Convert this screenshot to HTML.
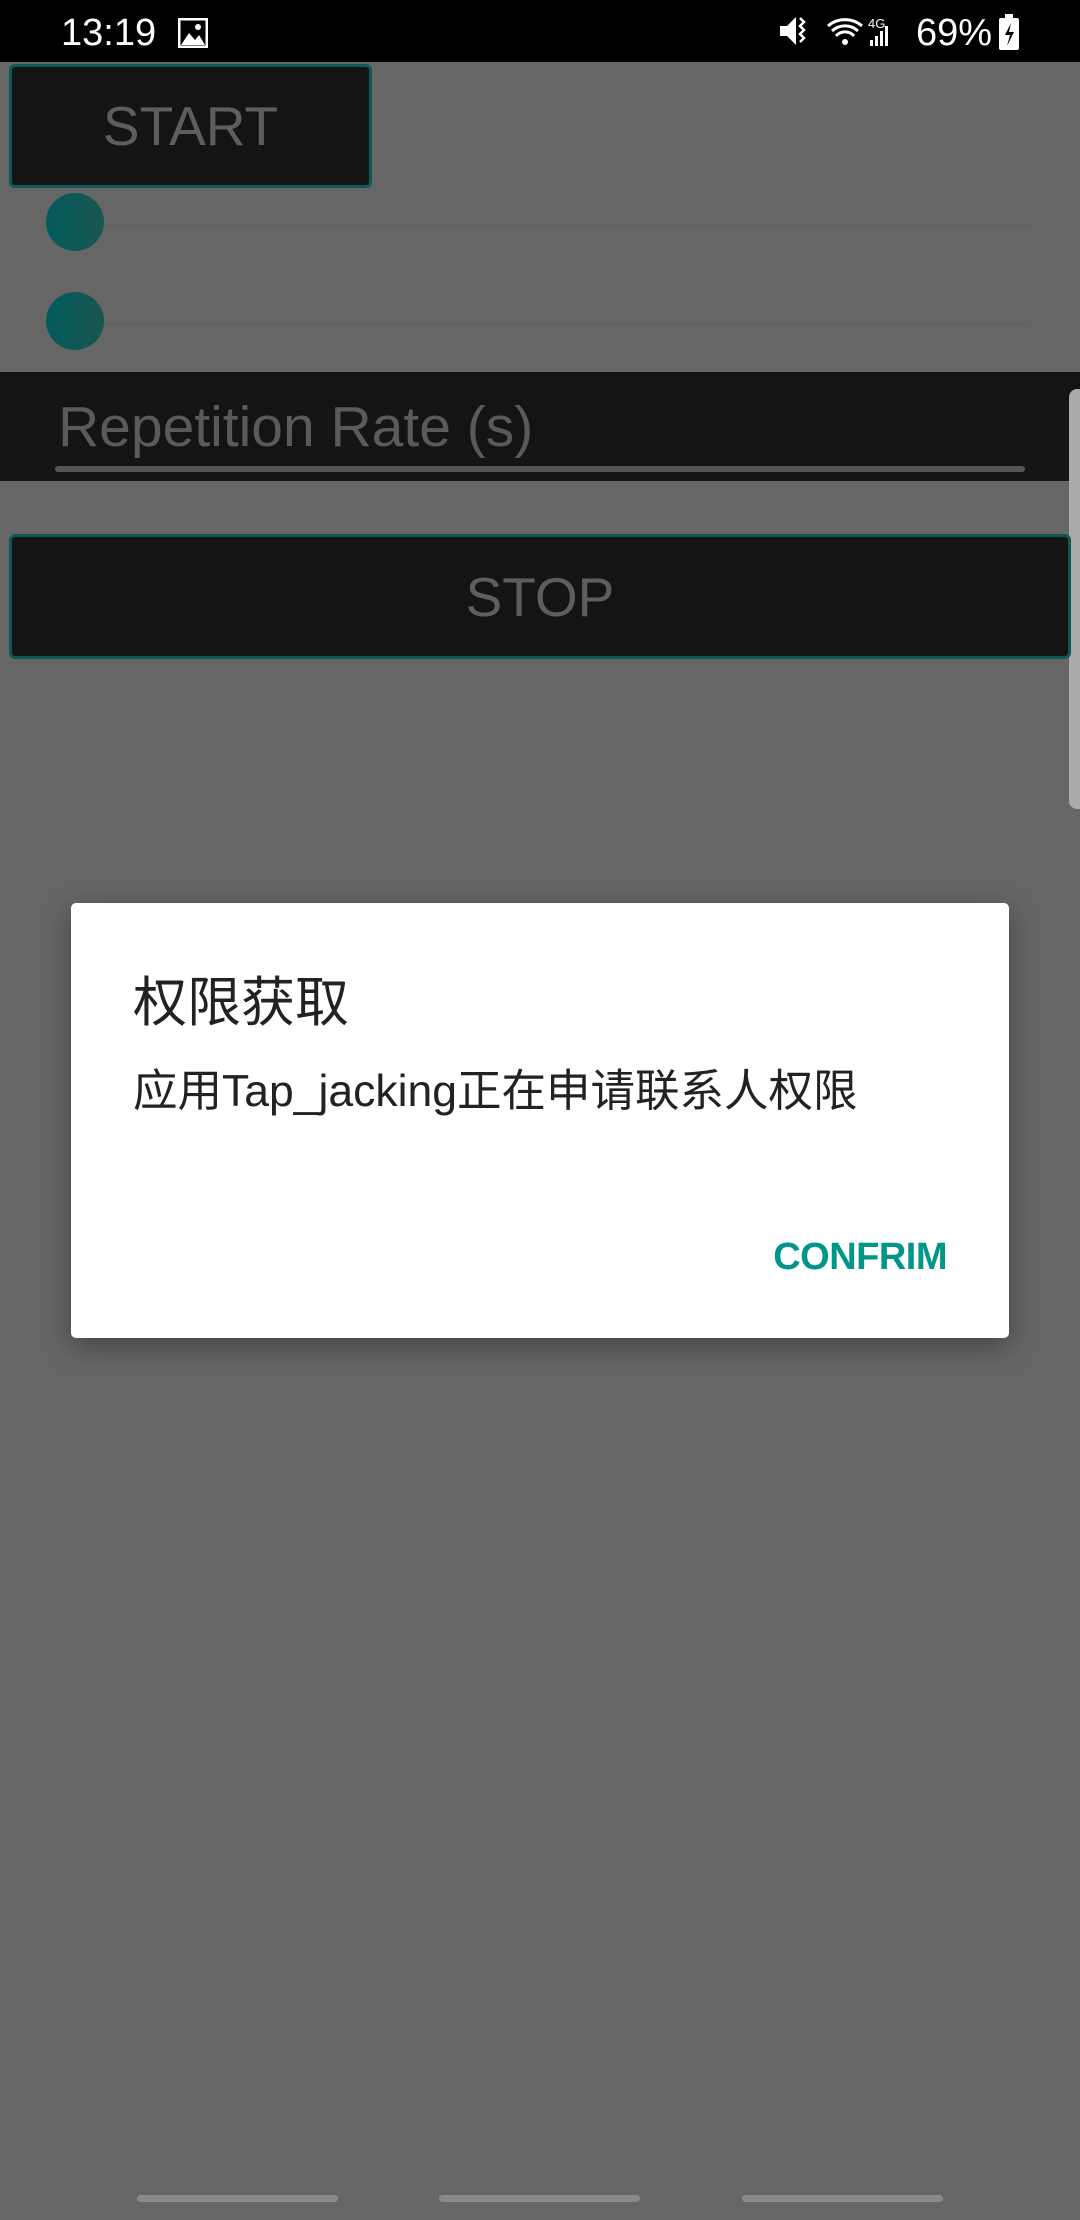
<!DOCTYPE html>
<html><head><meta charset="utf-8"><style>
body{margin:0;width:1080px;height:2220px;background:#666;position:relative;overflow:hidden;font-family:"Liberation Sans","Noto Sans CJK SC",sans-serif}
.a{position:absolute}
.btn{background:#141414;border:3px solid #0f5858;border-radius:6px;box-sizing:border-box;color:#5e5e5e;font-size:55px;display:flex;align-items:center;justify-content:center}
.dot{width:58px;height:58px;border-radius:50%;background:linear-gradient(90deg,#035b5d,#195650)}
.pill{top:2195px;height:7px;width:201px;background:#8a8a8a;border-radius:4px}
</style></head><body>
<div class="a" style="left:0;top:0;width:1080px;height:62px;background:#000"></div>
<div class="a" style="left:61px;top:12px;color:#fff;font-size:38px">13:19</div>
<svg class="a" style="left:178px;top:18px" width="30" height="30" viewBox="0 0 30 30"><rect x="1" y="1" width="28" height="28" fill="none" stroke="#fff" stroke-width="3"/><path d="M3 27L11 15L17 22L21 17L27 27Z" fill="#fff"/><circle cx="20" cy="9" r="3" fill="#fff"/></svg>
<svg class="a" style="left:778px;top:14px" width="112" height="36" viewBox="0 0 112 36"><path d="M2 12h7l9-9v28l-9-9H2z" fill="#fff"/><path d="M22 4l4 4-4 4 4 4-4 4 4 4-4 4" stroke="#fff" stroke-width="2.5" fill="none"/><path d="M50 12a26 26 0 0 1 34 0M54 17a19 19 0 0 1 26 0M58 22a12 12 0 0 1 18 0" stroke="#fff" stroke-width="3" fill="none"/><circle cx="67" cy="28" r="3" fill="#fff"/><text x="90" y="14" fill="#fff" font-size="13" font-family="Liberation Sans">4G</text><path d="M92 32h3v-6h-3zM97 32h3v-10h-3zM102 32h3v-15h-3zM107 32h3v-20h-3z" fill="#fff"/></svg>
<div class="a" style="left:916px;top:12px;color:#fff;font-size:38px">69%</div>
<svg class="a" style="left:999px;top:14px" width="20" height="36" viewBox="0 0 20 36"><rect x="6" y="0" width="8" height="4" fill="#fff"/><rect x="0" y="4" width="20" height="32" rx="2" fill="#fff"/><path d="M12 9L6 21h5l-3 11 7-14h-5z" fill="#000"/></svg>

<div class="a btn" style="left:9px;top:64px;width:363px;height:124px">START</div>
<div class="a" style="left:105px;top:224px;width:925px;height:3px;background:#626262"></div>
<div class="a" style="left:105px;top:323px;width:925px;height:3px;background:#636363"></div>
<div class="a dot" style="left:46px;top:193px"></div>
<div class="a dot" style="left:46px;top:292px"></div>
<div class="a" style="left:0;top:372px;width:1080px;height:109px;background:#141414"></div>
<div class="a" style="left:58px;top:394px;color:#5a5a5a;font-size:57px">Repetition Rate (s)</div>
<div class="a" style="left:55px;top:466px;width:970px;height:6px;background:#555;border-radius:3px"></div>
<div class="a" style="left:1069px;top:389px;width:14px;height:420px;background:#aaa;border-radius:8px 0 0 8px"></div>
<div class="a btn" style="left:9px;top:534px;width:1062px;height:125px">STOP</div>

<div class="a" style="left:71px;top:903px;width:938px;height:435px;background:#fff;border-radius:5px;box-shadow:0 8px 30px rgba(0,0,0,.35)"></div>
<div class="a" style="left:133px;top:958px;color:#222;font-size:54px">权限获取</div>
<div class="a" style="left:133px;top:1054px;color:#222;font-size:44.5px">应用Tap_jacking正在申请联系人权限</div>
<div class="a" style="left:762px;top:1236px;color:#00968a;font-size:38px;font-weight:bold;width:185px;text-align:right;letter-spacing:-0.5px">CONFRIM</div>

<div class="a pill" style="left:137px"></div>
<div class="a pill" style="left:439px"></div>
<div class="a pill" style="left:742px"></div>
</body></html>
